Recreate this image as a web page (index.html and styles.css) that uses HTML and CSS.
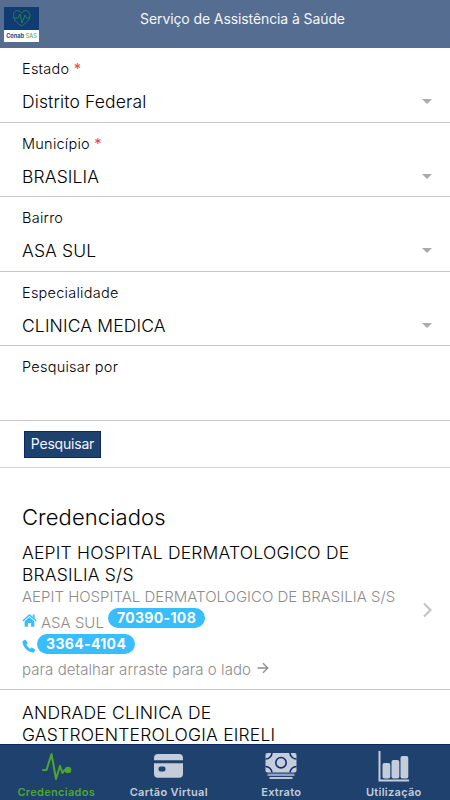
FILE: index.html
```html
<!DOCTYPE html>
<html lang="pt-BR">
  <head>
    <meta charset="UTF-8" />
    <meta name="viewport" content="width=device-width, initial-scale=1.0" />
    <title>Conab SAS</title>
    <link rel="stylesheet" href="styles.css">
  </head>
  <body>
    <header class="header">
      <div class="logo">
        <svg class="logo-heart" viewBox="0 0 35 23" fill="none" stroke="#238052" stroke-width="1">
          <path d="M17.500 19C13 16 9.500 13 9.500 8.500C9.500 3 15 2.200 17.500 6C20 2.200 26 3 26 8.500C26 13 22 16 17.500 19z" />
          <path d="M10 11h4l2-4 2 9 3-8 1.500 3H26" />
        </svg>
        <div class="logo-name"><b>Conab</b> <span>SAS</span></div>
      </div>
      <h1 class="title">Serviço de Assistência à Saúde</h1>
    </header>

    <main class="content">
      <form class="search">
        <div class="field">
          <label class="label">Estado <span class="required">*</span></label>
          <div class="select"><span class="value">Distrito Federal</span><i class="caret"></i></div>
        </div>
        <div class="field short">
          <label class="label">Município <span class="required">*</span></label>
          <div class="select"><span class="value">BRASILIA</span><i class="caret"></i></div>
        </div>
        <div class="field">
          <label class="label">Bairro</label>
          <div class="select"><span class="value">ASA SUL</span><i class="caret"></i></div>
        </div>
        <div class="field short">
          <label class="label">Especialidade</label>
          <div class="select"><span class="value">CLINICA MEDICA</span><i class="caret"></i></div>
        </div>
        <div class="field">
          <label class="label">Pesquisar por</label>
        </div>
        <div class="actions">
          <button class="button" type="button">Pesquisar</button>
        </div>
      </form>

      <h2 class="list-title">Credenciados</h2>

      <article class="item">
        <div class="item-body">
          <h3 class="item-name">AEPIT HOSPITAL DERMATOLOGICO DE BRASILIA S/S</h3>
          <p class="item-text company">AEPIT HOSPITAL DERMATOLOGICO DE BRASILIA S/S</p>
          <p class="item-text place">
            <svg class="icon-home" viewBox="0 0 16 15" fill="#38bdfd">
              <path d="M8 3.800l5.200 4.400v6H9.700v-4H6.300v4H2.800v-6z" />
              <path d="M.8 8L8 1.600 15.200 8" fill="none" stroke="#38bdfd" stroke-width="1.500" />
              <path d="M11.500 1h2v4.500l-2-1.800z" />
            </svg>
            <span class="district">ASA SUL</span>
            <span class="badge">70390-108</span>
          </p>
          <p class="item-text phone">
            <svg class="icon-phone" viewBox="0 0 14 14" fill="#38bdfd">
              <path d="M1.200 1.800L3 .8q.7-.3 1.100.4l1.300 2.300q.3.700-.2 1.200l-.9.800q1.300 2.800 4 4.200l.9-.9q.6-.5 1.200-.1l2.400 1.600q.7.500.3 1.100l-1 1.500q-.6.700-1.600.5C5.300 12.500 1.300 8.500.5 3.200q-.1-.9.700-1.400z" />
            </svg>
            <span class="badge">3364-4104</span>
          </p>
          <p class="item-text hint">
            <span>para detalhar arraste para o lado</span>
            <svg class="icon-arrow" viewBox="0 0 12 12" fill="none" stroke="#8c8c8c" stroke-width="1.300">
              <path d="M.5 6h10M6 1.200L10.800 6 6 10.800" />
            </svg>
          </p>
        </div>
        <svg class="chevron" viewBox="0 0 9 16" fill="none" stroke="#c1c1c4" stroke-width="2">
          <path d="M1 1.500L7.500 8 1 14.500" />
        </svg>
      </article>

      <article class="item next">
        <div class="item-body">
          <h3 class="item-name">ANDRADE CLINICA DE GASTROENTEROLOGIA EIRELI</h3>
        </div>
      </article>
    </main>

    <nav class="tabs">
      <a class="tab active">
        <svg class="tab-icon" viewBox="0 0 32 32" fill="none" stroke="#4da62f" stroke-width="2" stroke-linejoin="round" stroke-linecap="round">
          <path d="M3 19h3.500L11.500 3l4.500 25 4-13 2.500 7 2-3h3" />
          <circle cx="28" cy="19" r="2.300" fill="#4da62f" />
        </svg>
        <span>Credenciados</span>
      </a>
      <a class="tab">
        <svg class="tab-icon" viewBox="0 0 32 32" fill="#c5cddb">
          <path d="M5 3h21a4 4 0 0 1 4 4v2.300H1V7a4 4 0 0 1 4-4z" />
          <path fill-rule="evenodd" d="M1 12.200h29v10.500a4 4 0 0 1-4 4H5a4 4 0 0 1-4-4zM7.500 15.500a2 2 0 0 0-2 2v1a2 2 0 0 0 2 2h3a2 2 0 0 0 2-2v-1a2 2 0 0 0-2-2z" />
        </svg>
        <span>Cartão Virtual</span>
      </a>
      <a class="tab">
        <svg class="tab-icon" viewBox="0 0 32 32">
          <rect x=".5" y="2" width="31" height="19.500" rx="2" fill="#c5cddb" />
          <g fill="none" stroke="#102d70" stroke-width="1.600">
            <circle cx="16" cy="11.700" r="5.200" />
            <path d="M7 2a6.500 6.500 0 0 1-6.500 6M25 2a6.500 6.500 0 0 0 6.500 6M7 21.500a6.500 6.500 0 0 0-6.500-6M25 21.500a6.500 6.500 0 0 1 6.500-6" />
          </g>
          <path d="M2.500 23.800h27" fill="none" stroke="#8fa0bb" stroke-width="2.400" />
          <path d="M4.500 27h23" fill="none" stroke="#b9c3d4" stroke-width="2" />
        </svg>
        <span>Extrato</span>
      </a>
      <a class="tab">
        <svg class="tab-icon" viewBox="0 0 32 32" fill="#c5cddb">
          <path d="M1.500 0v29.500H31" fill="none" stroke="#c5cddb" stroke-width="2" />
          <rect x="4.500" y="12" width="7.800" height="15.500" rx="2" />
          <rect x="13.500" y="9" width="7.800" height="18.500" rx="2" />
          <rect x="22.500" y="5" width="7.800" height="22.500" rx="2" />
        </svg>
        <span>Utilização</span>
      </a>
    </nav>
  </body>
</html>
```

FILE: styles.css
```css
* {
    box-sizing: border-box;
}
body {
    margin: 0;
    height: 800px;
    display: flex;
    flex-direction: column;
    overflow: hidden;
    font-family: Inter, "Liberation Sans", sans-serif;
    font-weight: 300;
    background: white;
    color: #000;
}
h1, h2, h3, p {
    margin: 0;
    font-weight: inherit;
}
.header {
    display: grid;
    grid-template-columns: 35px 1fr;
    flex: none;
    height: 48px;
    padding: 7px 4px 0 4px;
    background: #546d90;
}
.logo {
    height: 35px;
    background: #103c72;
}
.logo-heart {
    display: block;
    width: 35px;
    height: 23px;
}
.logo-name {
    height: 12px;
    background: white;
    color: #24477b;
    font-size: 5.6px;
    line-height: 12px;
    text-align: center;
    white-space: nowrap;
}
.logo-name b {
    font-weight: 700;
}
.logo-name span {
    color: #5cac48;
    font-weight: 500;
}
.title {
    padding-top: 3px;
    color: #f4f6f9;
    font-size: 14px;
    font-weight: 400;
    letter-spacing: -0.1px;
    line-height: 18px;
    text-align: center;
}
.content {
    flex: 1;
    min-height: 0;
    overflow: hidden;
}
.field {
    height: 75px;
    padding: 11px 18px 0 22px;
    border-bottom: 1px solid #c8c8cb;
}
.field.short {
    height: 74px;
}
.label {
    display: block;
    font-size: 14.5px;
    letter-spacing: 0.25px;
    line-height: 20px;
}
.required {
    color: #f43f55;
    font-weight: 400;
}
.select {
    display: flex;
    justify-content: space-between;
    align-items: center;
    height: 24px;
    margin-top: 10px;
}
.value {
    font-size: 17.5px;
    letter-spacing: 0.13px;
}
.caret {
    border: 5.5px solid transparent;
    border-top-color: #aaa;
    border-bottom: 0;
}
.actions {
    height: 47px;
    padding: 10px 24px 0;
    border-bottom: 1px solid #d5d5d5;
}
.button {
    display: block;
    width: 77px;
    height: 27px;
    padding: 0 0 2px;
    border: 1px solid #0d2766;
    background: #1e416d;
    color: #f4f6f9;
    font-family: inherit;
    font-size: 14px;
    letter-spacing: -0.2px;
}
.list-title {
    padding: 34px 22px 10px;
    font-size: 22px;
    letter-spacing: 0.1px;
    line-height: 30px;
}
.item {
    display: flex;
    align-items: center;
    height: 148px;
    padding: 0 18px 0 22px;
    border-bottom: 1px solid #c8c8cb;
}
.item-body {
    flex: 1;
    align-self: flex-start;
}
.item-name {
    width: 360px;
    font-size: 17.5px;
    letter-spacing: 0.2px;
    line-height: 21.5px;
}
.item-text {
    display: flex;
    color: #8c8c8c;
    font-size: 15px;
    line-height: 22px;
    white-space: nowrap;
}
.company {
    padding-top: 1px;
}
.place {
    height: 26px;
}
.icon-home {
    width: 15px;
    height: 15px;
    margin: 5px 4px 0 0;
}
.district {
    margin: 4px 4px 0 0;
}
.badge {
    height: 20px;
    padding: 0 9px;
    border-radius: 10px;
    background: #38bdfd;
    color: white;
    font-size: 14px;
    font-weight: bold;
    letter-spacing: 0.35px;
    line-height: 20px;
}
.phone {
    height: 25px;
}
.icon-phone {
    width: 14px;
    height: 14px;
    margin: 5px 1px 0 0;
}
.hint {
    letter-spacing: 0.08px;
}
.icon-arrow {
    width: 12px;
    height: 12px;
    margin: 3px 0 0 6px;
}
.chevron {
    width: 9px;
    height: 16px;
    margin-bottom: 12px;
}
.item.next {
    padding-top: 12px;
}
.tabs {
    display: grid;
    grid-template-columns: repeat(4, 1fr);
    flex: none;
    height: 56px;
    border-top: 1px solid #0c2766;
    background: #1e416d;
}
.tab {
    display: flex;
    flex-direction: column;
    align-items: center;
    padding-top: 6px;
    color: #c5cddb;
    font-size: 11px;
    font-weight: 600;
    letter-spacing: 0.3px;
    line-height: 18px;
}
.tab.active {
    color: #4da62f;
}
.tab-icon {
    width: 32px;
    height: 32px;
}
```
